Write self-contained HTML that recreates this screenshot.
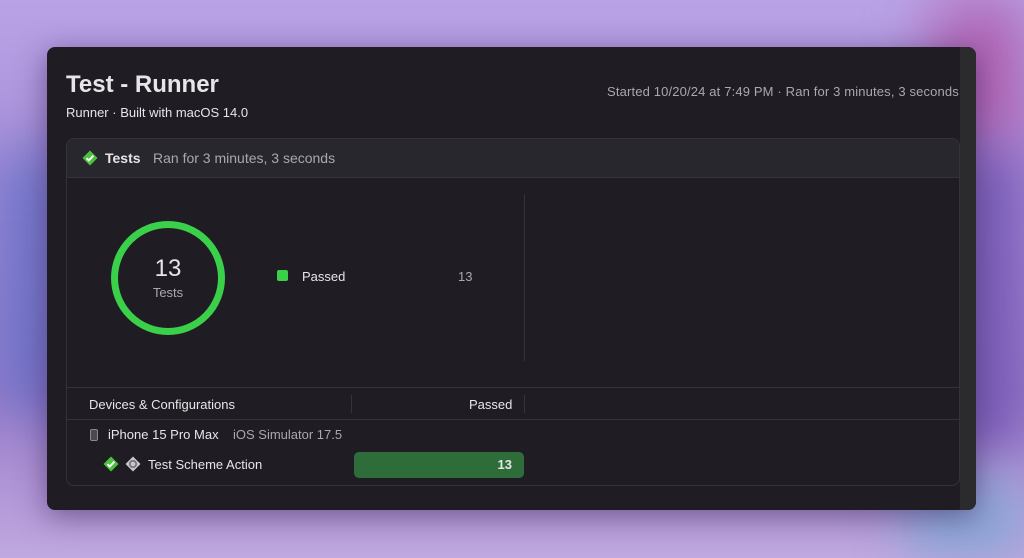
<!DOCTYPE html>
<html><head><style>
body{margin:0;width:1024px;height:558px;overflow:hidden;font-family:"Liberation Sans",sans-serif;
background:linear-gradient(180deg,#b9a3e6 0%,#a98fd8 30%,#9b7cc9 70%,#c0a8e0 100%);position:relative}
.bgl{position:absolute;left:0;top:150px;width:60px;height:260px;background:#6470c8;filter:blur(30px)}
.bgr{position:absolute;right:0;top:150px;width:70px;height:300px;background:#7a5cb8;filter:blur(25px)}
.bgr2{position:absolute;right:0;top:0;width:90px;height:150px;background:#b060b0;filter:blur(30px)}
.bgb{position:absolute;right:0;bottom:0;width:120px;height:80px;background:#8aa6d6;filter:blur(25px)}
.win{position:absolute;left:47px;top:47px;width:929px;height:463px;background:#1f1d23;border-radius:8px;box-shadow:0 6px 30px rgba(40,20,70,.5);overflow:hidden}
.sb{position:absolute;right:0;top:0;width:16px;height:100%;background:#2b2a2c}
.t{position:absolute;color:#e6e6e8;white-space:nowrap}
.panel{position:absolute;left:19px;top:91px;width:892px;height:346px;border:1px solid #35333a;border-radius:8px;overflow:hidden}
.hd{position:absolute;left:0;top:0;width:100%;height:38px;background:#29272e;border-bottom:1px solid #35333a}
.line{position:absolute;background:#35333a}
</style></head><body>
<div class="bgl"></div><div class="bgr2"></div><div class="bgr"></div><div class="bgb"></div>
<div class="win">
<div class="sb"></div>
<div class="t" style="left:19px;top:24px;font-size:24px;font-weight:bold">Test - Runner</div>
<div class="t" style="left:19px;top:58px;font-size:13px">Runner · Built with macOS 14.0</div>
<div class="t" style="left:560px;top:37px;font-size:13px;color:#a9a8ad;letter-spacing:0.15px">Started 10/20/24 at 7:49 PM · Ran for 3 minutes, 3 seconds</div>
<div class="panel">
<div class="hd">
<svg style="position:absolute;left:15px;top:11px" width="16" height="16" viewBox="0 0 16 16"><path d="M8 0.5L15.5 8 8 15.5 0.5 8z" fill="#4cc13e"/><path d="M4.5 8.2l2.3 2.3 4.5-4.8" stroke="#fff" stroke-width="2" fill="none"/></svg>
<div class="t" style="left:38px;top:11px;font-size:14px;font-weight:bold">Tests</div>
<div class="t" style="left:86px;top:11px;font-size:14px;color:#a9a8ad">Ran for 3 minutes, 3 seconds</div>
</div>
<svg style="position:absolute;left:42px;top:80px" width="118" height="118"><circle cx="59" cy="59" r="53.5" stroke="#3ad04a" stroke-width="7" fill="none"/></svg>
<div class="t" style="left:42px;top:116px;width:118px;text-align:center;font-size:24px">13</div>
<div class="t" style="left:42px;top:146px;width:118px;text-align:center;font-size:13px;color:#a9a8ad">Tests</div>
<div style="position:absolute;left:210px;top:131px;width:11px;height:11px;background:#3ad04a;border-radius:2px"></div>
<div class="t" style="left:235px;top:130px;font-size:13px">Passed</div>
<div class="t" style="left:391px;top:130px;font-size:13px;color:#a9a8ad">13</div>
<div class="line" style="left:457px;top:55px;width:1px;height:167px"></div>
<div class="line" style="left:0;top:248px;width:100%;height:1px"></div>
<div class="t" style="left:22px;top:258px;font-size:13px">Devices &amp; Configurations</div>
<div class="line" style="left:284px;top:256px;width:1px;height:18px"></div>
<div class="t" style="left:402px;top:258px;font-size:13px">Passed</div>
<div class="line" style="left:457px;top:256px;width:1px;height:18px"></div>
<div class="line" style="left:0;top:280px;width:100%;height:1px"></div>
<div style="position:absolute;left:23px;top:290px;width:6px;height:10px;border:1px solid #8a898e;border-radius:2px;background:#4a494e"></div>
<div class="t" style="left:41px;top:288px;font-size:13px">iPhone 15 Pro Max</div>
<div class="t" style="left:166px;top:288px;font-size:13px;color:#a9a8ad">iOS Simulator 17.5</div>
<svg style="position:absolute;left:36px;top:317px" width="16" height="16" viewBox="0 0 16 16"><path d="M8 0.5L15.5 8 8 15.5 0.5 8z" fill="#4cc13e"/><path d="M4.5 8.2l2.3 2.3 4.5-4.8" stroke="#fff" stroke-width="2" fill="none"/></svg>
<svg style="position:absolute;left:58px;top:317px" width="16" height="16" viewBox="0 0 16 16"><path d="M8 0.5L15.5 8 8 15.5 0.5 8z" fill="#c8c8cc"/><circle cx="8" cy="8" r="3.2" fill="none" stroke="#707075" stroke-width="1.6"/></svg>
<div class="t" style="left:81px;top:318px;font-size:13px">Test Scheme Action</div>
<div style="position:absolute;left:287px;top:313px;width:170px;height:26px;background:#2e6d3a;border-radius:5px"></div>
<div class="t" style="left:287px;top:318px;width:158px;text-align:right;font-size:13px;font-weight:bold">13</div>
</div>
</div>
</body></html>
